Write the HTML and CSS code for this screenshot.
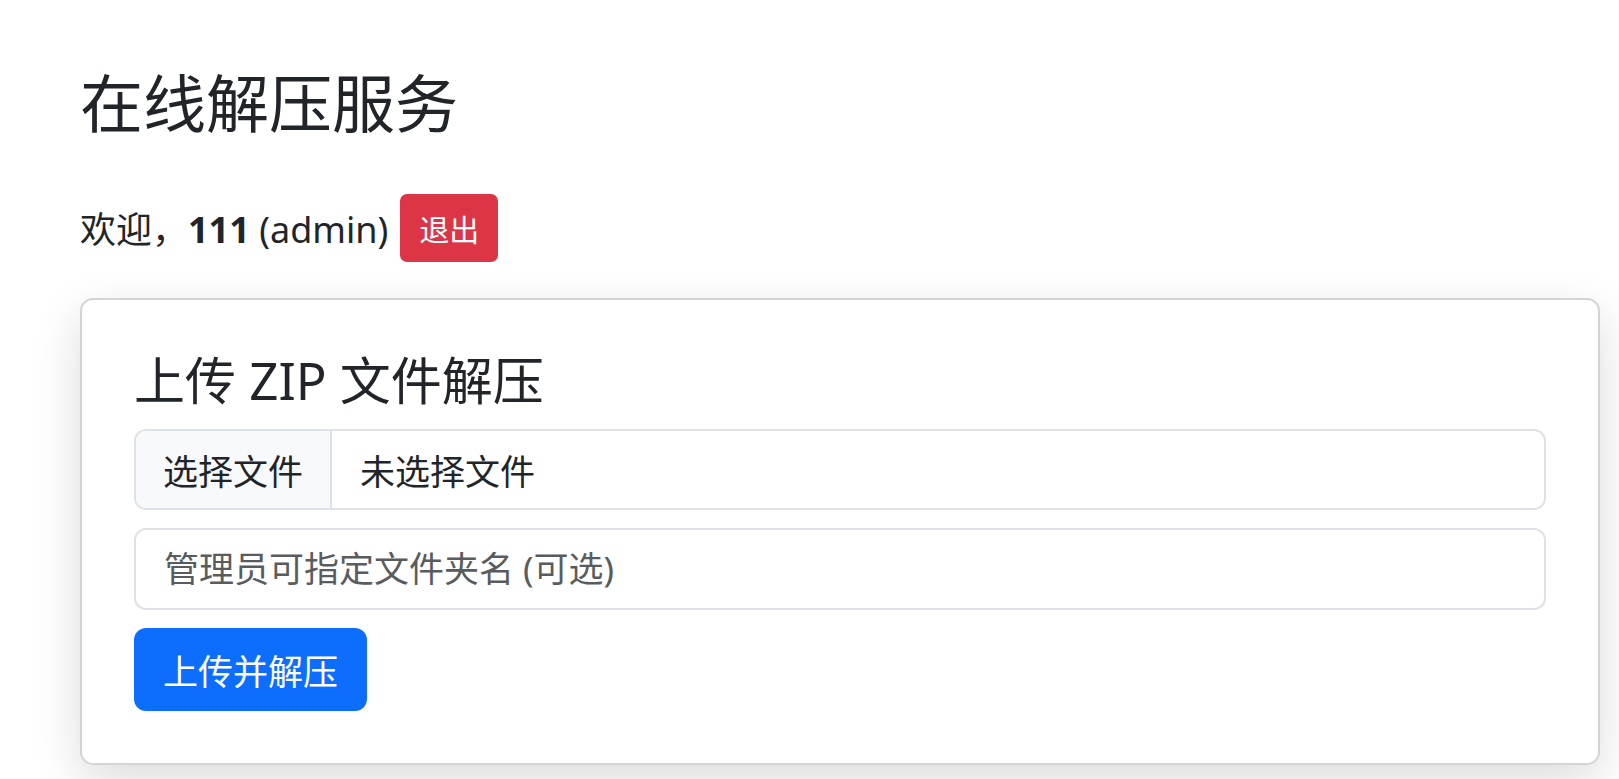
FILE: index.html
```html
<!DOCTYPE html>
<html lang="zh-CN">
<head>
  <meta charset="UTF-8" />
  <meta name="viewport" content="width=device-width, initial-scale=1.0" />
  <title>在线解压服务</title>
  <link rel="stylesheet" href="styles.css">
</head>
<body>

<div class="page">
  <h1 class="page-title">在线解压服务</h1>

  <div class="welcome">
    <span>欢迎，<strong>111</strong> (admin)</span>
    <button class="btn btn-danger">退出</button>
  </div>

  <div class="card">
    <h2 class="card-title">上传 ZIP 文件解压</h2>

    <form class="upload-form" onsubmit="return false">
      <label class="file-group">
        <span class="file-button">选择文件</span>
        <span class="file-name">未选择文件</span>
        <input type="file" accept=".zip" class="file-input" />
      </label>

      <input type="text" class="text-input" placeholder="管理员可指定文件夹名 (可选)" />

      <div>
        <button class="btn btn-primary btn-lg" type="submit">上传并解压</button>
      </div>
    </form>
  </div>
</div>

</body>
</html>
```

FILE: styles.css
```css
body {
  margin: 0;
  background-color: #ffffff;
  font-family: "Noto Sans", "Noto Sans CJK SC", sans-serif;
  color: #212529;
  font-size: 28px;
}
.page {
  padding: 65px 19px 40px 80px;
}
.page-title {
  font-size: 63px;
  font-weight: 400;
  line-height: 1.2;
  margin: 0 0 53px;
}
.welcome {
  display: flex;
  align-items: center;
  gap: 12px;
  font-size: 36px;
  height: 68px;
  margin-bottom: 36px;
}
.welcome strong {
  font-weight: 700;
}
.btn {
  font-family: inherit;
  border: none;
  border-radius: 7px;
  color: #ffffff;
  cursor: pointer;
}
.btn-danger {
  background-color: #dc3545;
  font-size: 30px;
  height: 68px;
  padding: 0 19px;
}
.btn-primary {
  background-color: #0d6efd;
}
.btn-lg {
  font-size: 35px;
  height: 83px;
  padding: 0 29px;
  border-radius: 12px;
}
.card {
  border: 2px solid #d4d4d4;
  border-radius: 13px;
  background: #ffffff;
  box-shadow: 0 16px 48px rgba(0, 0, 0, 0.14);
  padding: 50px 52px 52px;
}
.card-title {
  font-size: 51px;
  font-weight: 400;
  line-height: 1.2;
  margin: 0 0 18px;
}
.upload-form {
  display: flex;
  flex-direction: column;
  gap: 18px;
}
.file-group {
  display: flex;
  height: 81px;
  box-sizing: border-box;
  border: 2px solid #dee2e6;
  border-radius: 12px;
  overflow: hidden;
  font-size: 35px;
  cursor: pointer;
}
.file-button {
  display: flex;
  align-items: center;
  padding: 0 27px;
  background-color: #f8f9fa;
  border-right: 2px solid #dee2e6;
}
.file-name {
  display: flex;
  align-items: center;
  padding: 0 28px;
}
.file-input {
  display: none;
}
.text-input {
  height: 82px;
  box-sizing: border-box;
  border: 2px solid #dee2e6;
  border-radius: 12px;
  padding: 0 28px;
  font-family: inherit;
  font-size: 35px;
  color: #212529;
  width: 100%;
}
.text-input::placeholder {
  color: #595c5f;
}
```
